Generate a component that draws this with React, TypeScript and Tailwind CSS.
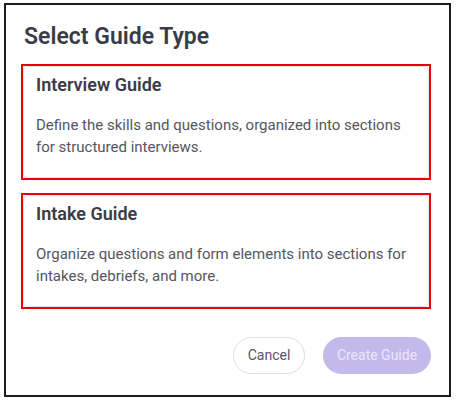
import React from "react";

const font = { fontFamily: "Roboto, 'Liberation Sans', sans-serif" };

function Card({ title, body }: { title: string; body: React.ReactNode }) {
  return (
    <div className="border-2 border-[#e8000b]">
      <div className="rounded-[4px] border border-[#e4e4ea] pl-[12px] pr-[12px] pt-[6px] pb-[19px]">
        <div className="whitespace-nowrap text-[18px] leading-[24px] font-semibold text-[#3b3b47]">{title}</div>
        <div className="mt-[17px] whitespace-nowrap text-[15px] leading-[22px] text-[#55555f]">{body}</div>
      </div>
    </div>
  );
}

export default function App() {
  return (
    <div className="w-[458px] h-[401px] bg-white" style={font}>
      <div className="ml-[4px] mt-[3px] w-[447px] h-[394px] border-2 border-[#1c1c1c] bg-white flex flex-col pl-[15px] pr-[18px]">
        <h1 className="mt-[17px] ml-[3px] whitespace-nowrap text-[23px] leading-[30px] font-semibold text-[#3b3b47]">Select Guide Type</h1>
        <div className="mt-[12px] flex flex-col gap-[13px]">
          <Card
            title="Interview Guide"
            body={<>Define the skills and questions, organized into sections<br />for structured interviews.</>}
          />
          <Card
            title="Intake Guide"
            body={<>Organize questions and form elements into sections for<br />intakes, debriefs, and more.</>}
          />
        </div>
        <div className="mt-[28px] flex justify-end gap-[18px]">
          <button className="h-[37px] w-[72px] rounded-full border border-[#dcdce2] bg-white text-[14px] text-[#55556a]">Cancel</button>
          <button className="h-[37px] w-[108px] rounded-full bg-[#c3b9ea] text-[14px] text-[#ebe7f9]">Create Guide</button>
        </div>
      </div>
    </div>
  );
}
